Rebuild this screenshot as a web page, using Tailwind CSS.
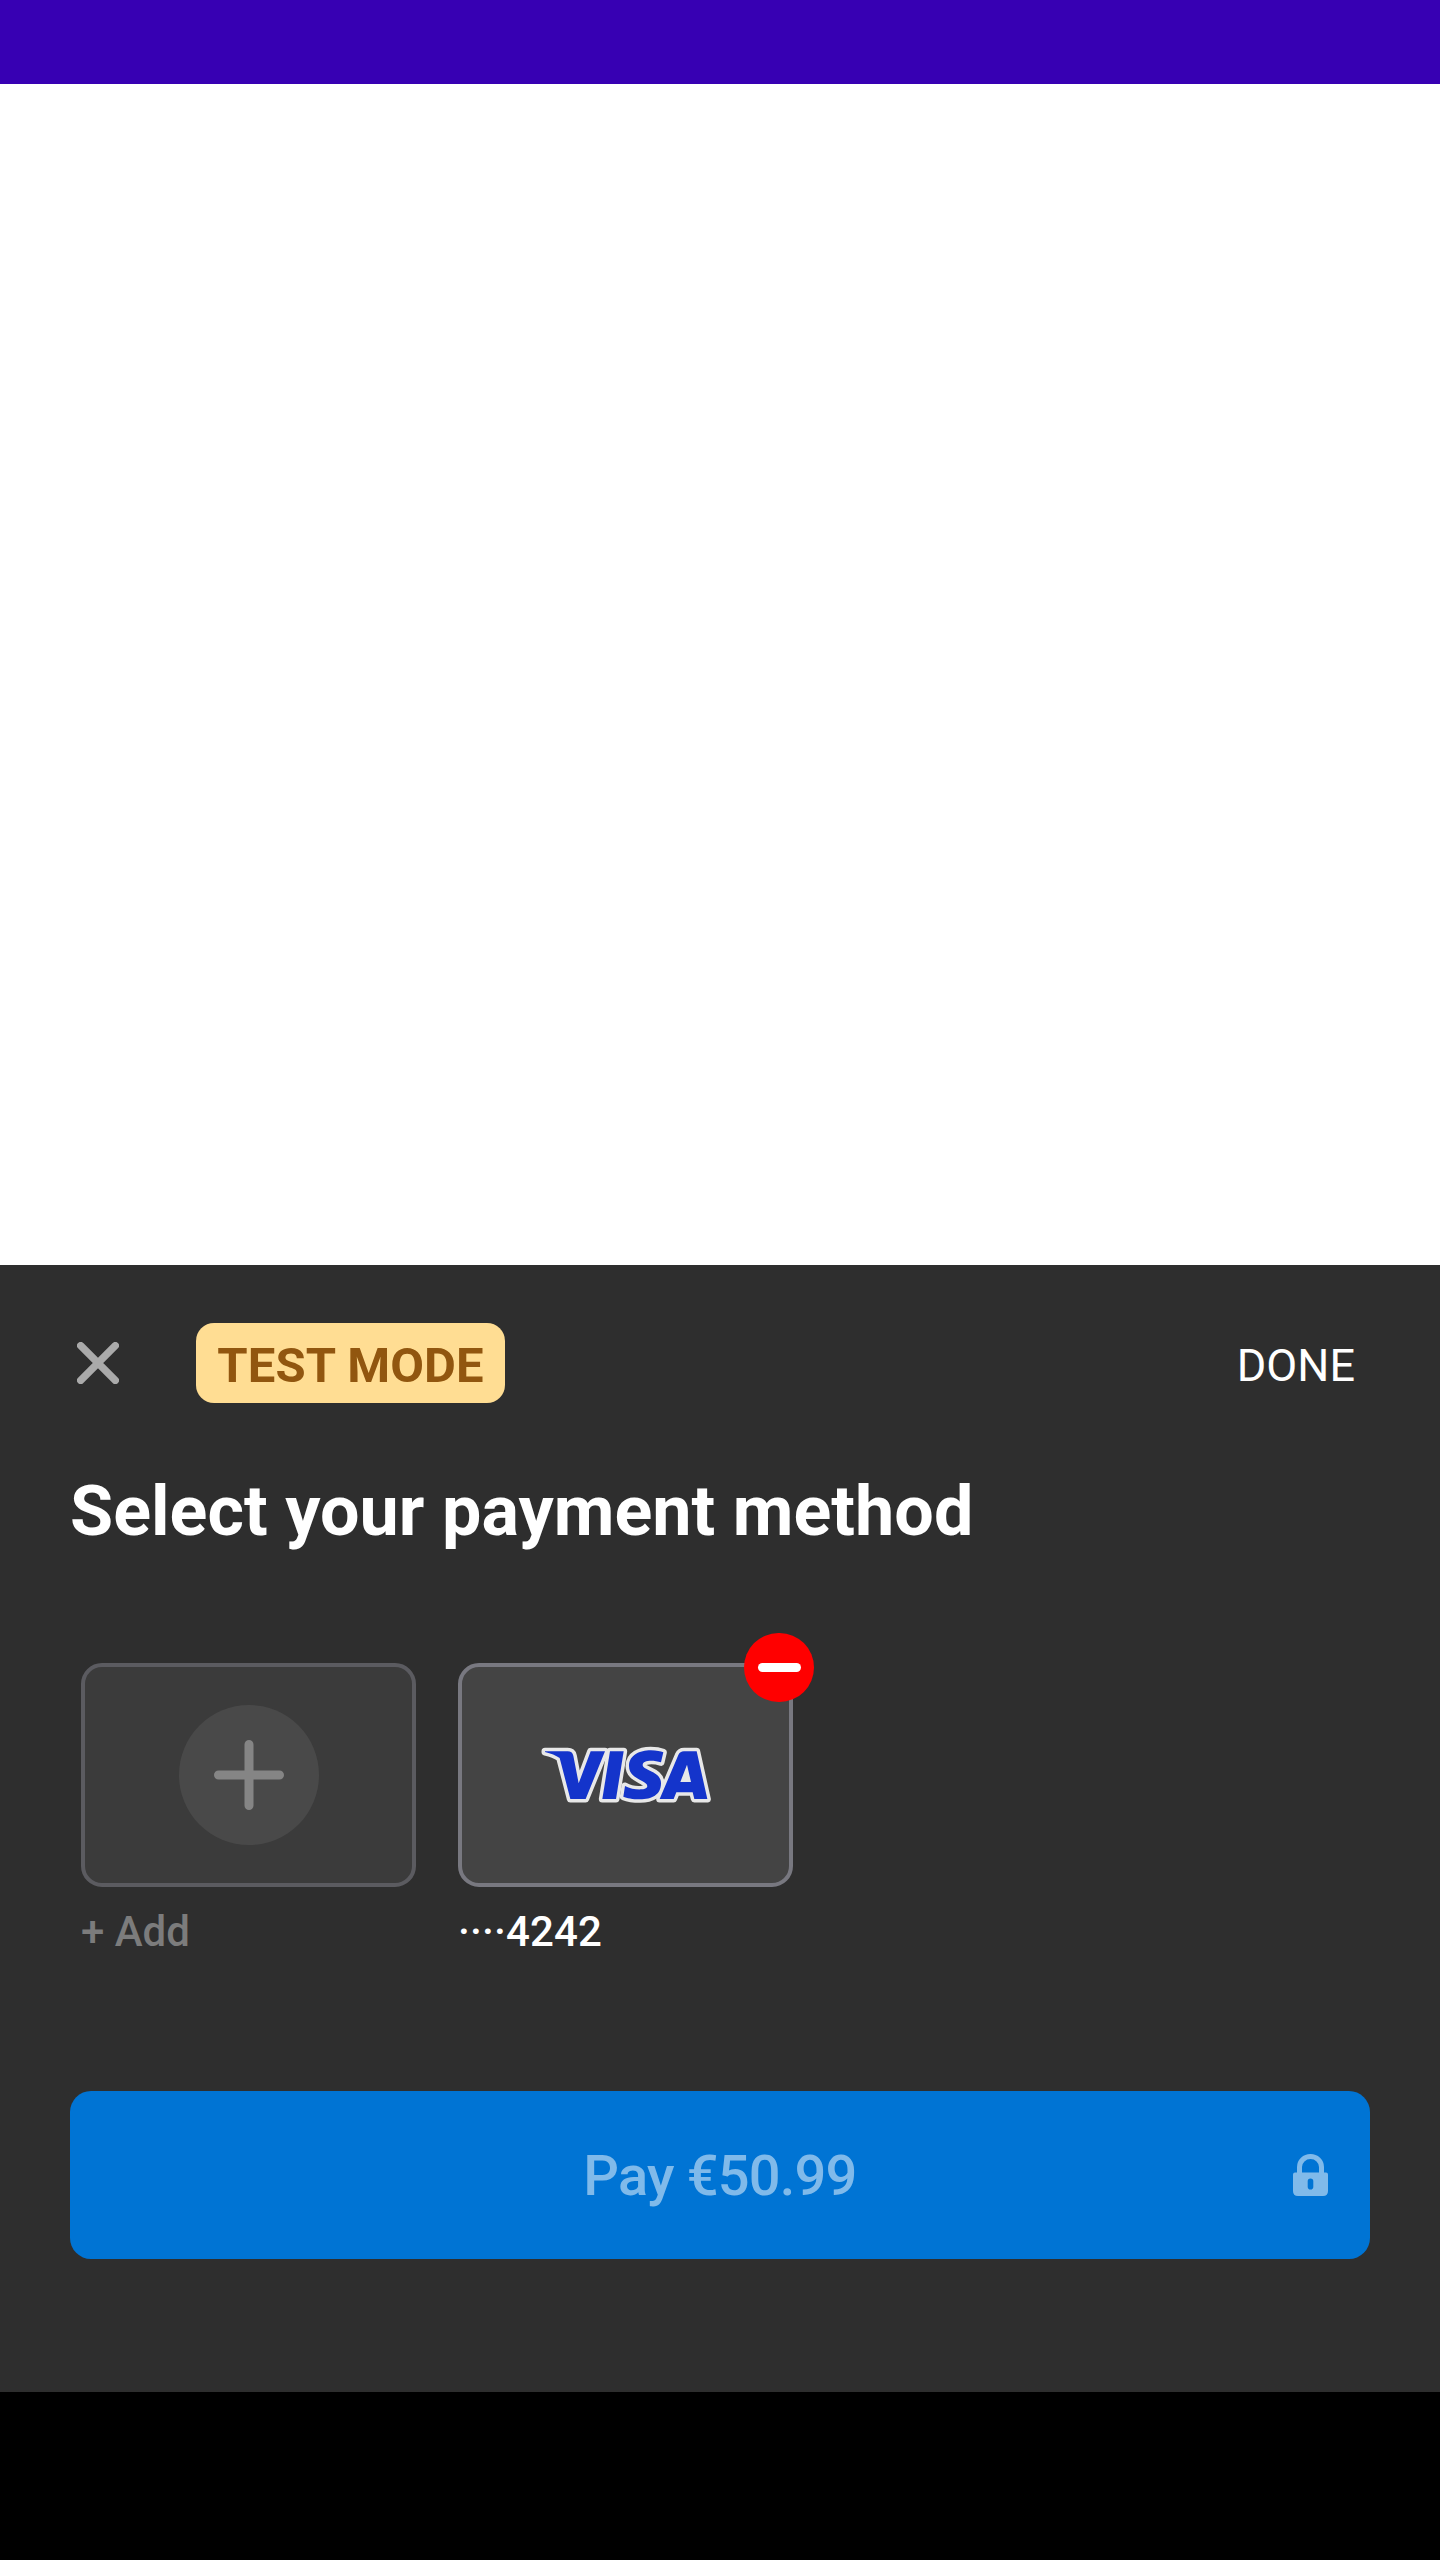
<!DOCTYPE html>
<html lang="en">
<head>
<meta charset="utf-8">
<title>Payment method</title>
<script src="https://cdn.jsdelivr.net/npm/@tailwindcss/browser@4"></script>
</head>
<body class="flex h-[2560px] w-[1440px] flex-col overflow-hidden bg-white font-['Roboto',sans-serif]">
  <div class="h-[84px] shrink-0 bg-[#3700b3]"></div>
  <main class="grow"></main>
  <section class="flex h-[1127px] shrink-0 flex-col bg-[#2e2e2e] px-[70px] pt-[58px]">
    <header class="flex h-20 items-center">
      <svg class="ml-[7px] size-[42px]" viewBox="0 0 42 42" fill="none" stroke="#aaaaaa" stroke-width="7.4" stroke-linecap="round"><path d="M3.700 3.700 38.300 38.300M38.300 3.700 3.700 38.300"/></svg>
      <span class="ml-[77px] flex h-20 w-[309px] items-center justify-center rounded-[18px] bg-[#ffdd93] pt-1 text-[49px] leading-none font-bold tracking-[0.1px] whitespace-nowrap text-[#91560f]">TEST MODE</span>
      <button class="mr-[15px] ml-auto pt-[5px] text-[45px] leading-none text-white">DONE</button>
    </header>
    <h1 class="mt-[67px] text-[70px] leading-[82px] font-bold tracking-[0.06px] whitespace-nowrap text-white">Select your payment method</h1>
    <div class="mt-[111px] ml-[11px] flex gap-[42px]">
      <div class="w-[335px]">
        <div class="flex h-[224px] items-center justify-center rounded-[21px] border-4 border-[#5b5b60] bg-[#3b3b3b]">
          <span class="flex size-[140px] items-center justify-center rounded-full bg-[#494949]">
            <svg class="size-[70px]" viewBox="0 0 70 70" fill="none" stroke="#858585" stroke-width="9" stroke-linecap="round"><path d="M35 4.500v61M4.500 35h61"/></svg>
          </span>
        </div>
        <p class="mt-[20px] text-[42px] leading-[50px] font-medium text-[#7c7c7c]">+ Add</p>
      </div>
      <div class="relative w-[335px]">
        <div class="flex h-[224px] rounded-[21px] border-4 border-[#787880] bg-[#444444] pt-[63px] pl-[68px]">
          <svg class="h-[90px] w-[200px]" viewBox="0 0 600 270">
            <g fill="#e8e8e8" stroke="#e8e8e8" stroke-width="21" stroke-linejoin="round">
              <path d="M45 64H113Q127 64 130 77L146 160 182 64H225L167 207H121L89 84Q72 72 45 66Z"/>
              <path d="M240 64H281L258 207H217Z"/>
              <path d="M400 67 393 97C370 90 338 90 338 105C338 122 393 122 393 160C393 195 365 208 330 208C308 208 290 204 280 200L285 168C300 177 322 179 335 178C352 176 354 170 350 163C340 148 297 145 297 108C297 75 330 61 362 61C380 61 392 64 400 67Z"/>
              <path d="M462 64H500L532 207H493L488 187H439L431 207H389L445 75Q450 64 462 64Z"/>
            </g>
            <g fill="#1434cb">
              <path d="M45 64H113Q127 64 130 77L146 160 182 64H225L167 207H121L89 84Q72 72 45 66Z"/>
              <path d="M240 64H281L258 207H217Z"/>
              <path d="M400 67 393 97C370 90 338 90 338 105C338 122 393 122 393 160C393 195 365 208 330 208C308 208 290 204 280 200L285 168C300 177 322 179 335 178C352 176 354 170 350 163C340 148 297 145 297 108C297 75 330 61 362 61C380 61 392 64 400 67Z"/>
              <path fill-rule="evenodd" d="M462 64H500L532 207H493L488 187H439L431 207H389L445 75Q450 64 462 64ZM471 104 451 156H483Z"/>
            </g>
          </svg>
        </div>
        <span class="absolute -top-[30px] left-[286px] flex h-[69px] w-[70px] items-center justify-center rounded-full bg-[#ff0000]"><span class="h-[9px] w-[43px] rounded-full bg-white"></span></span>
        <p class="mt-[20px] text-[42px] leading-[50px] font-medium tracking-[0.1px] text-white">····4242</p>
      </div>
    </div>
    <button class="relative mt-[134px] flex h-[168px] w-[1300px] items-center justify-center rounded-[21px] bg-[#0074d4] text-[56px] leading-none font-medium tracking-[-0.8px] text-[#80baea]">
      <span class="pt-[2px]">Pay €50.99</span>
      <svg class="absolute top-[63px] left-[1223px] h-[42px] w-[35px]" viewBox="0 0 35 42"><path d="M6.500 20V13a11 10.500 0 0 1 22 0v7" fill="none" stroke="#80baea" stroke-width="5"/><path fill="#80baea" fill-rule="evenodd" d="M2 18.500H33Q35 18.500 35 20.500V37Q35 42 30 42H5Q0 42 0 37V20.500Q0 18.500 2 18.500ZM17.500 24.500a2.800 2.800 0 0 0-2.800 2.800v5.400a2.800 2.800 0 0 0 5.600 0v-5.400a2.800 2.800 0 0 0-2.800-2.800Z"/></svg>
    </button>
  </section>
  <div class="h-[168px] shrink-0 bg-black"></div>
</body>
</html>
